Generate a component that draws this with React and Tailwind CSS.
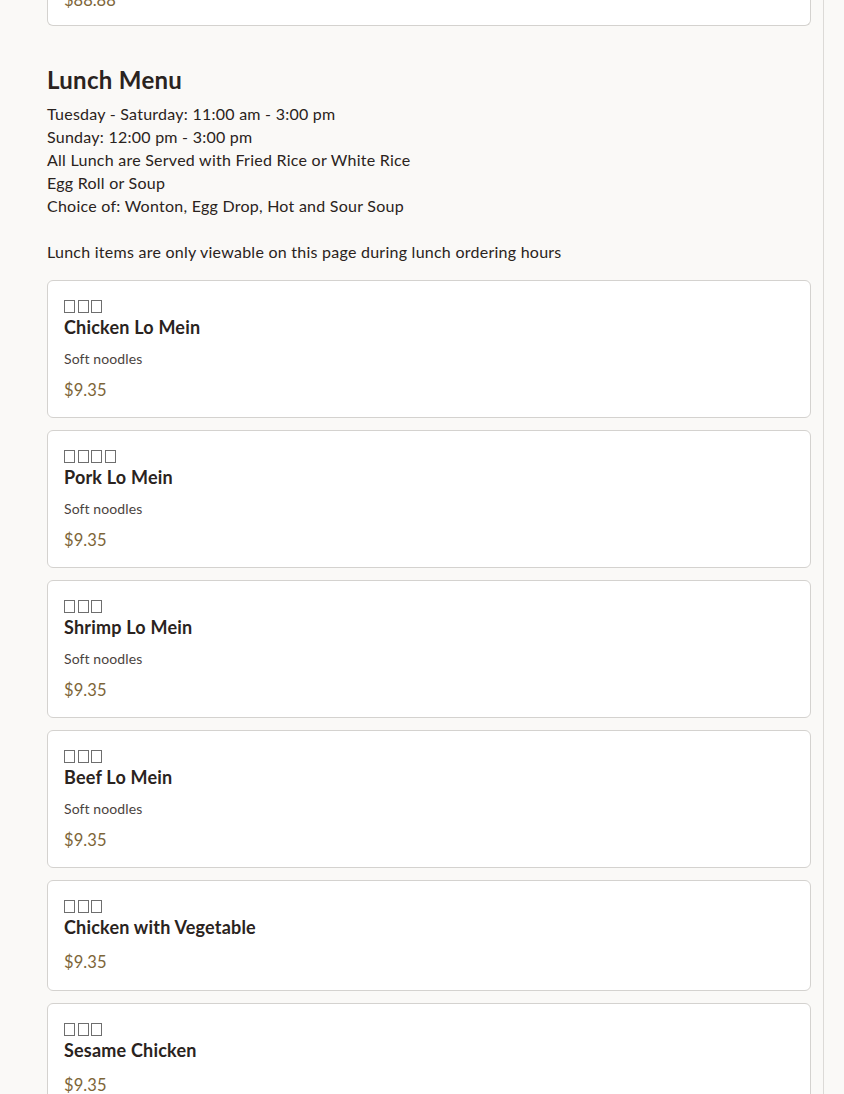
import React from "react";

const items = [
  { zh: 3, name: "Chicken Lo Mein", desc: "Soft noodles", price: "$9.35" },
  { zh: 4, name: "Pork Lo Mein", desc: "Soft noodles", price: "$9.35" },
  { zh: 3, name: "Shrimp Lo Mein", desc: "Soft noodles", price: "$9.35" },
  { zh: 3, name: "Beef Lo Mein", desc: "Soft noodles", price: "$9.35" },
  { zh: 3, name: "Chicken with Vegetable", price: "$9.35" },
  { zh: 3, name: "Sesame Chicken", price: "$9.35" },
];

function Tofu({ n }) {
  return (
    <div className="flex h-[19px] items-end gap-[2.5px] pb-[2px]">
      {Array.from({ length: n }).map((_, i) => (
        <span
          key={i}
          className="inline-block h-[13px] w-[11px] border-[1.5px] border-[#6e6e6e]"
        />
      ))}
    </div>
  );
}

function Card({ item }) {
  return (
    <div
      className={
        (item.desc ? "pb-[15px] " : "pb-[16px] ") +
        "mb-[12px] rounded-[6px] border border-[#d4d2cf] bg-white px-4 pt-[15px]"
      }
    >
      <Tofu n={item.zh} />
      <div className="text-[18px] font-bold leading-[24px] tracking-[0.2px] text-[#2a2320]">{item.name}</div>
      {item.desc && (
        <div className="mt-[10px] text-[14px] leading-[20px] tracking-[0.1px] text-[#4a4340]">{item.desc}</div>
      )}
      <div
        className={
          (item.desc ? "mt-[9px] " : "mt-[11px] ") +
          "text-[16.5px] leading-[24px] tracking-[0.1px] text-[#7d6538]"
        }
      >
        {item.price}
      </div>
    </div>
  );
}

export default function App() {
  return (
    <div
      className="min-h-[1094px] overflow-hidden bg-[#faf9f7]"
      style={{ fontFamily: "Lato, 'Noto Sans', sans-serif" }}
    >
      <div className="w-[824px] min-h-[1094px] border-r border-[#dcdad7] pl-[47px] pr-[12px]">
        <div className="-mt-[12px] h-[38px] rounded-b-[6px] border border-t-0 border-[#d4d2cf] bg-white px-4">
          <div className="text-[16.5px] leading-[24px] text-[#7d6538]">$88.88</div>
        </div>
        <h2 className="mt-[38px] text-[24px] font-bold leading-[32px] tracking-[0.3px] text-[#2a2320]">Lunch Menu</h2>
        <div className="mt-[6px] text-[16px] leading-[23px] tracking-[0.25px] text-[#2a2320]">
          <div>Tuesday - Saturday: 11:00 am - 3:00 pm</div>
          <div>Sunday: 12:00 pm - 3:00 pm</div>
          <div>All Lunch are Served with Fried Rice or White Rice</div>
          <div>Egg Roll or Soup</div>
          <div>Choice of: Wonton, Egg Drop, Hot and Sour Soup</div>
          <div className="h-[23px]" />
          <div>Lunch items are only viewable on this page during lunch ordering hours</div>
        </div>
        <div className="mt-[17px]">
          {items.map((it, i) => (
            <Card key={i} item={it} />
          ))}
        </div>
      </div>
    </div>
  );
}
